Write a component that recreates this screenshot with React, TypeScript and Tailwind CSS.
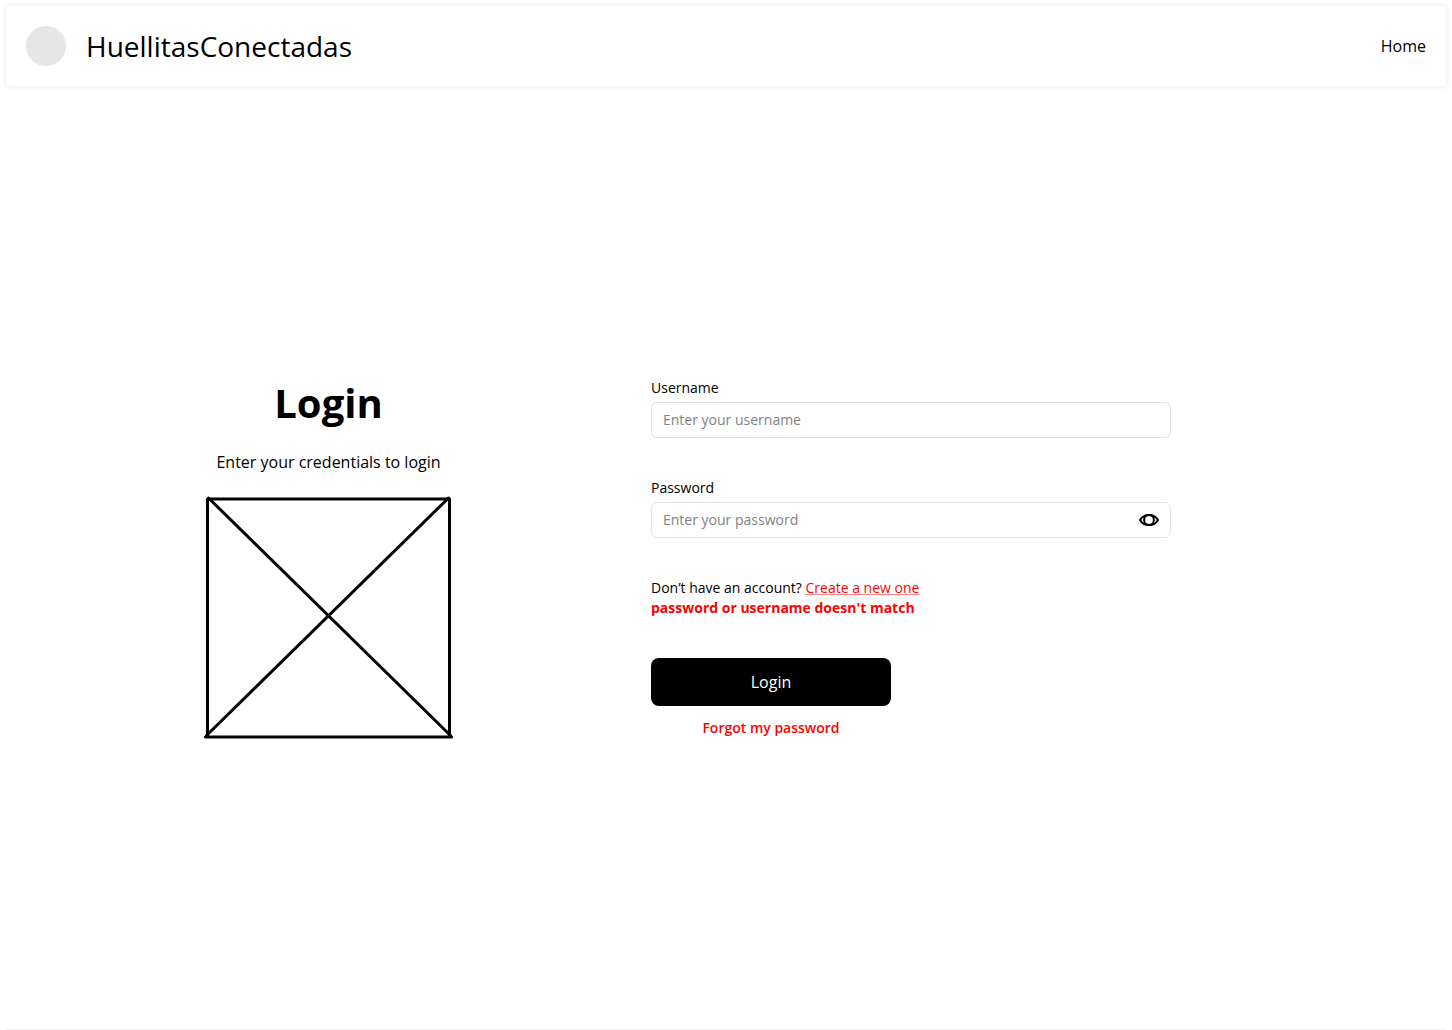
import { useState } from "react";

function Header() {
  return (
    <header className="flex h-20 items-center justify-between bg-white px-5 shadow-[0_0_6px_rgba(0,0,0,0.1)]">
      <div className="flex items-center gap-5">
        <span className="size-10 rounded-full bg-[#e6e6e6]" />
        <span className="text-[28px] leading-10">HuellitasConectadas</span>
      </div>
      <nav>
        <a href="#home" className="text-base">
          Home
        </a>
      </nav>
    </header>
  );
}

function ImagePlaceholder() {
  return (
    <svg
      width="250"
      height="244"
      viewBox="0 0 250 244"
      fill="none"
      stroke="black"
      strokeWidth="3"
      strokeLinecap="round"
      role="img"
      aria-label="Image placeholder"
    >
      <path d="M4 3H245M3.500 3V240M245.500 3V240M1.500 241H247.500" />
      <path d="M4.500 2L246.500 239.500M244.500 2L2.500 239.500" />
    </svg>
  );
}

function EyeIcon() {
  return (
    <svg width="20" height="20" viewBox="0 0 20 20" fill="none" stroke="black" strokeWidth="2">
      <path
        d="M1 10C3 6.500 6 4.900 10 4.900S17 6.500 19 10C17 13.500 14 15.100 10 15.100S3 13.500 1 10Z"
        strokeLinejoin="round"
      />
      <circle cx="10" cy="10" r="4.900" />
    </svg>
  );
}

const inputClass =
  "h-9 w-full rounded-md border border-[#e4e4e4] bg-white pl-[11px] text-sm outline-none placeholder:text-[#828282] placeholder:opacity-100 focus:border-black";

function LoginForm() {
  const [visible, setVisible] = useState(false);
  return (
    <form
      className="flex w-full max-w-[520px] flex-col gap-10 text-sm leading-5"
      onSubmit={(event) => event.preventDefault()}
    >
      <div className="flex flex-col gap-1">
        <label htmlFor="username">Username</label>
        <input id="username" type="text" placeholder="Enter your username" className={inputClass} />
      </div>
      <div className="flex flex-col gap-1">
        <label htmlFor="password">Password</label>
        <div className="relative">
          <input
            id="password"
            type={visible ? "text" : "password"}
            placeholder="Enter your password"
            className={inputClass}
          />
          <button
            type="button"
            aria-label="Show password"
            className="absolute inset-y-0 right-3 flex items-center"
            onClick={() => setVisible(!visible)}
          >
            <EyeIcon />
          </button>
        </div>
      </div>
      <div>
        <p>
          Don’t have an account?{" "}
          <a href="#register" className="text-[#ff0000] underline decoration-[#ff8080]">
            Create a new one
          </a>
        </p>
        <p className="font-bold text-[#ff0000]">password or username doesn't match</p>
      </div>
      <div className="flex w-60 flex-col items-center gap-3">
        <button type="submit" className="h-12 w-full rounded-lg bg-black text-base text-white">
          Login
        </button>
        <a href="#forgot" className="font-semibold text-[#ff0000]">
          Forgot my password
        </a>
      </div>
    </form>
  );
}

export default function App() {
  return (
    <div className="flex min-h-screen flex-col bg-white px-1.5 pt-1.5 font-['Open_Sans',sans-serif] text-black">
      <Header />
      <main className="grid flex-1 grid-cols-[645fr_795fr] content-center border-b border-[#f0f0f0] pt-0.5">
        <section className="flex flex-col items-center">
          <h1 className="text-[40px] leading-[50px] font-bold">Login</h1>
          <p className="mt-[22px] text-base">Enter your credentials to login</p>
          <div className="mt-[22px]">
            <ImagePlaceholder />
          </div>
        </section>
        <LoginForm />
      </main>
    </div>
  );
}
